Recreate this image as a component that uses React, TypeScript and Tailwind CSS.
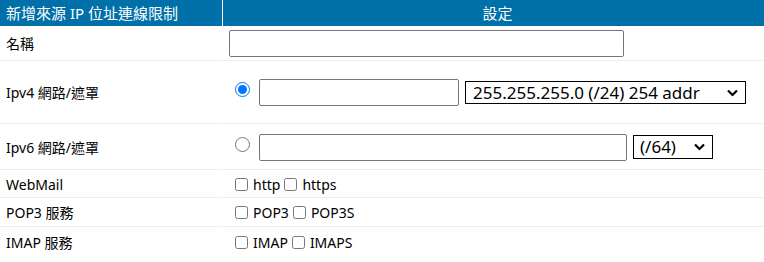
import React from "react";

const fontStack = "font-['Noto_Sans','Noto_Sans_CJK_TC',sans-serif]";

interface RowProps {
  label: string;
  height: string;
  last?: boolean;
  children: React.ReactNode;
}

const Row: React.FC<RowProps> = ({ label, height, last, children }) => {
  const line = last ? "" : "border-b border-[#eeeeee]";
  return (
    <>
      <div className={`${height} ${line} flex items-center pl-[6px] text-[14px]`}>{label}</div>
      <div className={`${height} ${line} flex items-center text-[14px]`}>{children}</div>
    </>
  );
};

const Chevron = () => (
  <svg width="11" height="7" viewBox="0 0 11 7" className="pointer-events-none absolute right-[8px] top-1/2 -translate-y-1/2">
    <path d="M1 1l4.5 4.5L10 1" stroke="black" strokeWidth="2.2" fill="none" />
  </svg>
);

const Checks = ({ a, b }: { a: string; b: string }) => (
  <div className="flex items-center">
    <input type="checkbox" className="m-0 ml-[12px] w-[13px] h-[13px]" />
    <span className="ml-[5px]">{a}</span>
    <input type="checkbox" className="m-0 ml-[4px] w-[13px] h-[13px]" />
    <span className="ml-[5px]">{b}</span>
  </div>
);

export default function App() {
  return (
    <div className={`w-[764px] h-[262px] bg-white text-black ${fontStack}`}>
      <div className="grid grid-cols-[222px_541px] gap-[1px]">
        {/* header */}
        <div className="h-[26px] bg-[#0070a8] text-white text-[15px] pl-[6px] flex items-center">
          新增來源 IP 位址連線限制
        </div>
        <div className="h-[26px] bg-[#0070a8] text-white text-[15px] pl-[8px] flex items-center justify-center">
          設定
        </div>

        <Row label="名稱" height="h-[34px]">
          <input type="text" className="ml-[6px] w-[395px] h-[27px] border border-[#767676] rounded-[2px] bg-white" />
        </Row>

        <Row label="Ipv4 網路/遮罩" height="h-[62px]">
          <input type="radio" name="ipver" defaultChecked className="m-0 ml-[12px] w-[15px] h-[15px] -mt-[6px]" />
          <input type="text" className="ml-[9px] w-[200px] h-[27px] border border-[#767676] rounded-[2px] bg-white" />
          <div className="relative ml-[6px]">
            <select className="appearance-none w-[281px] h-[23px] border border-black bg-white pl-[7px] text-[17px] leading-[21px] rounded-none outline-none">
              <option>255.255.255.0 (/24) 254 addr</option>
            </select>
            <Chevron />
          </div>
        </Row>

        <Row label="Ipv6 網路/遮罩" height="h-[45px]">
          <input type="radio" name="ipver" className="m-0 ml-[12px] w-[15px] h-[15px] -mt-[6px]" />
          <input type="text" className="ml-[9px] w-[368px] h-[27px] border border-[#767676] rounded-[2px] bg-white" />
          <div className="relative ml-[6px]">
            <select className="appearance-none w-[80px] h-[24px] border border-black bg-white pl-[6px] text-[17px] leading-[22px] rounded-none outline-none">
              <option>(/64)</option>
            </select>
            <Chevron />
          </div>
        </Row>

        <Row label="WebMail" height="h-[27px]">
          <Checks a="http" b="https" />
        </Row>

        <Row label="POP3 服務" height="h-[28px]">
          <Checks a="POP3" b="POP3S" />
        </Row>

        <Row label="IMAP 服務" height="h-[28px]" last>
          <Checks a="IMAP" b="IMAPS" />
        </Row>
      </div>
    </div>
  );
}
